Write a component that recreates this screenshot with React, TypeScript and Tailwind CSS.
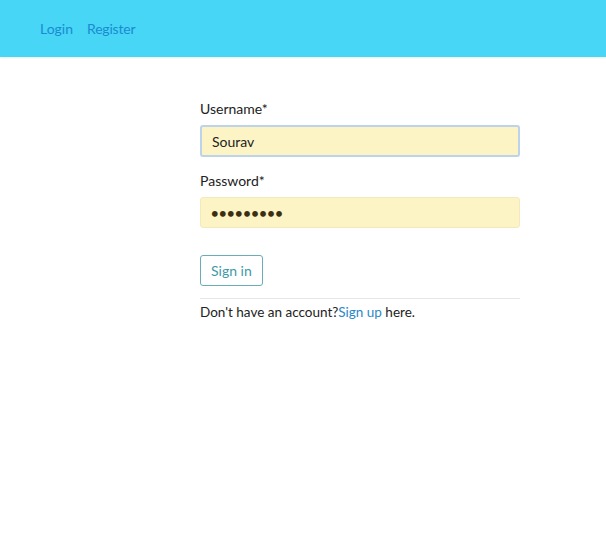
import { useState } from 'react';

export default function App() {
    const [username, setUsername] = useState('Sourav');
    const [password, setPassword] = useState('123456789');

    return (
        <div className="min-h-screen bg-white text-[#222] font-['Lato','Open_Sans',sans-serif] text-[14px]">
            {/* Navbar */}
            <nav className="h-[57px] bg-[#47d6f5] flex items-center px-10 gap-[14px] shadow-[0_1px_2px_rgba(0,0,0,0.08)]">
                <a href="#" className="text-[#1a8bd2] text-[14px]">Login</a>
                <a href="#" className="text-[#1a8bd2] text-[14px] tracking-[-0.2px]">Register</a>
            </nav>

            {/* Login form */}
            <div className="pl-[200px] pt-[42px]">
                <form className="w-[320px]" onSubmit={(e) => e.preventDefault()}>
                    <label className="block text-[14px] leading-5 mb-[6px]">Username*</label>
                    <input
                        value={username}
                        onChange={(e) => setUsername(e.target.value)}
                        className="w-full h-[32px] px-[10px] bg-[#fdf4c6] border-2 border-[#bcd3ea] rounded-[3px] text-[14px] outline-none"
                    />

                    <label className="block text-[14px] leading-5 mt-[14px] mb-[6px]">Password*</label>
                    <input
                        type="password"
                        value={password}
                        onChange={(e) => setPassword(e.target.value)}
                        className="w-full h-[31px] px-[10px] bg-[#fdf4c6] border border-[#f3e9bd] rounded-[3px] text-[13px] font-bold tracking-[0.5px] text-[#3a2f10] outline-none"
                    />

                    <button
                        type="submit"
                        className="mt-[27px] h-[31px] px-[10px] border border-[#6aadb8] rounded-[3px] text-[#3d9aa8] text-[14px] bg-white"
                    >
                        Sign in
                    </button>

                    <div className="mt-[12px] border-t border-[#e6e6e6] pt-[3px]">
                        <p className="text-[13.5px] leading-5">
                            Don't have an account?<a href="#" className="text-[#2a88c8]">Sign up</a> here.
                        </p>
                    </div>
                </form>
            </div>
        </div>
    );
}
